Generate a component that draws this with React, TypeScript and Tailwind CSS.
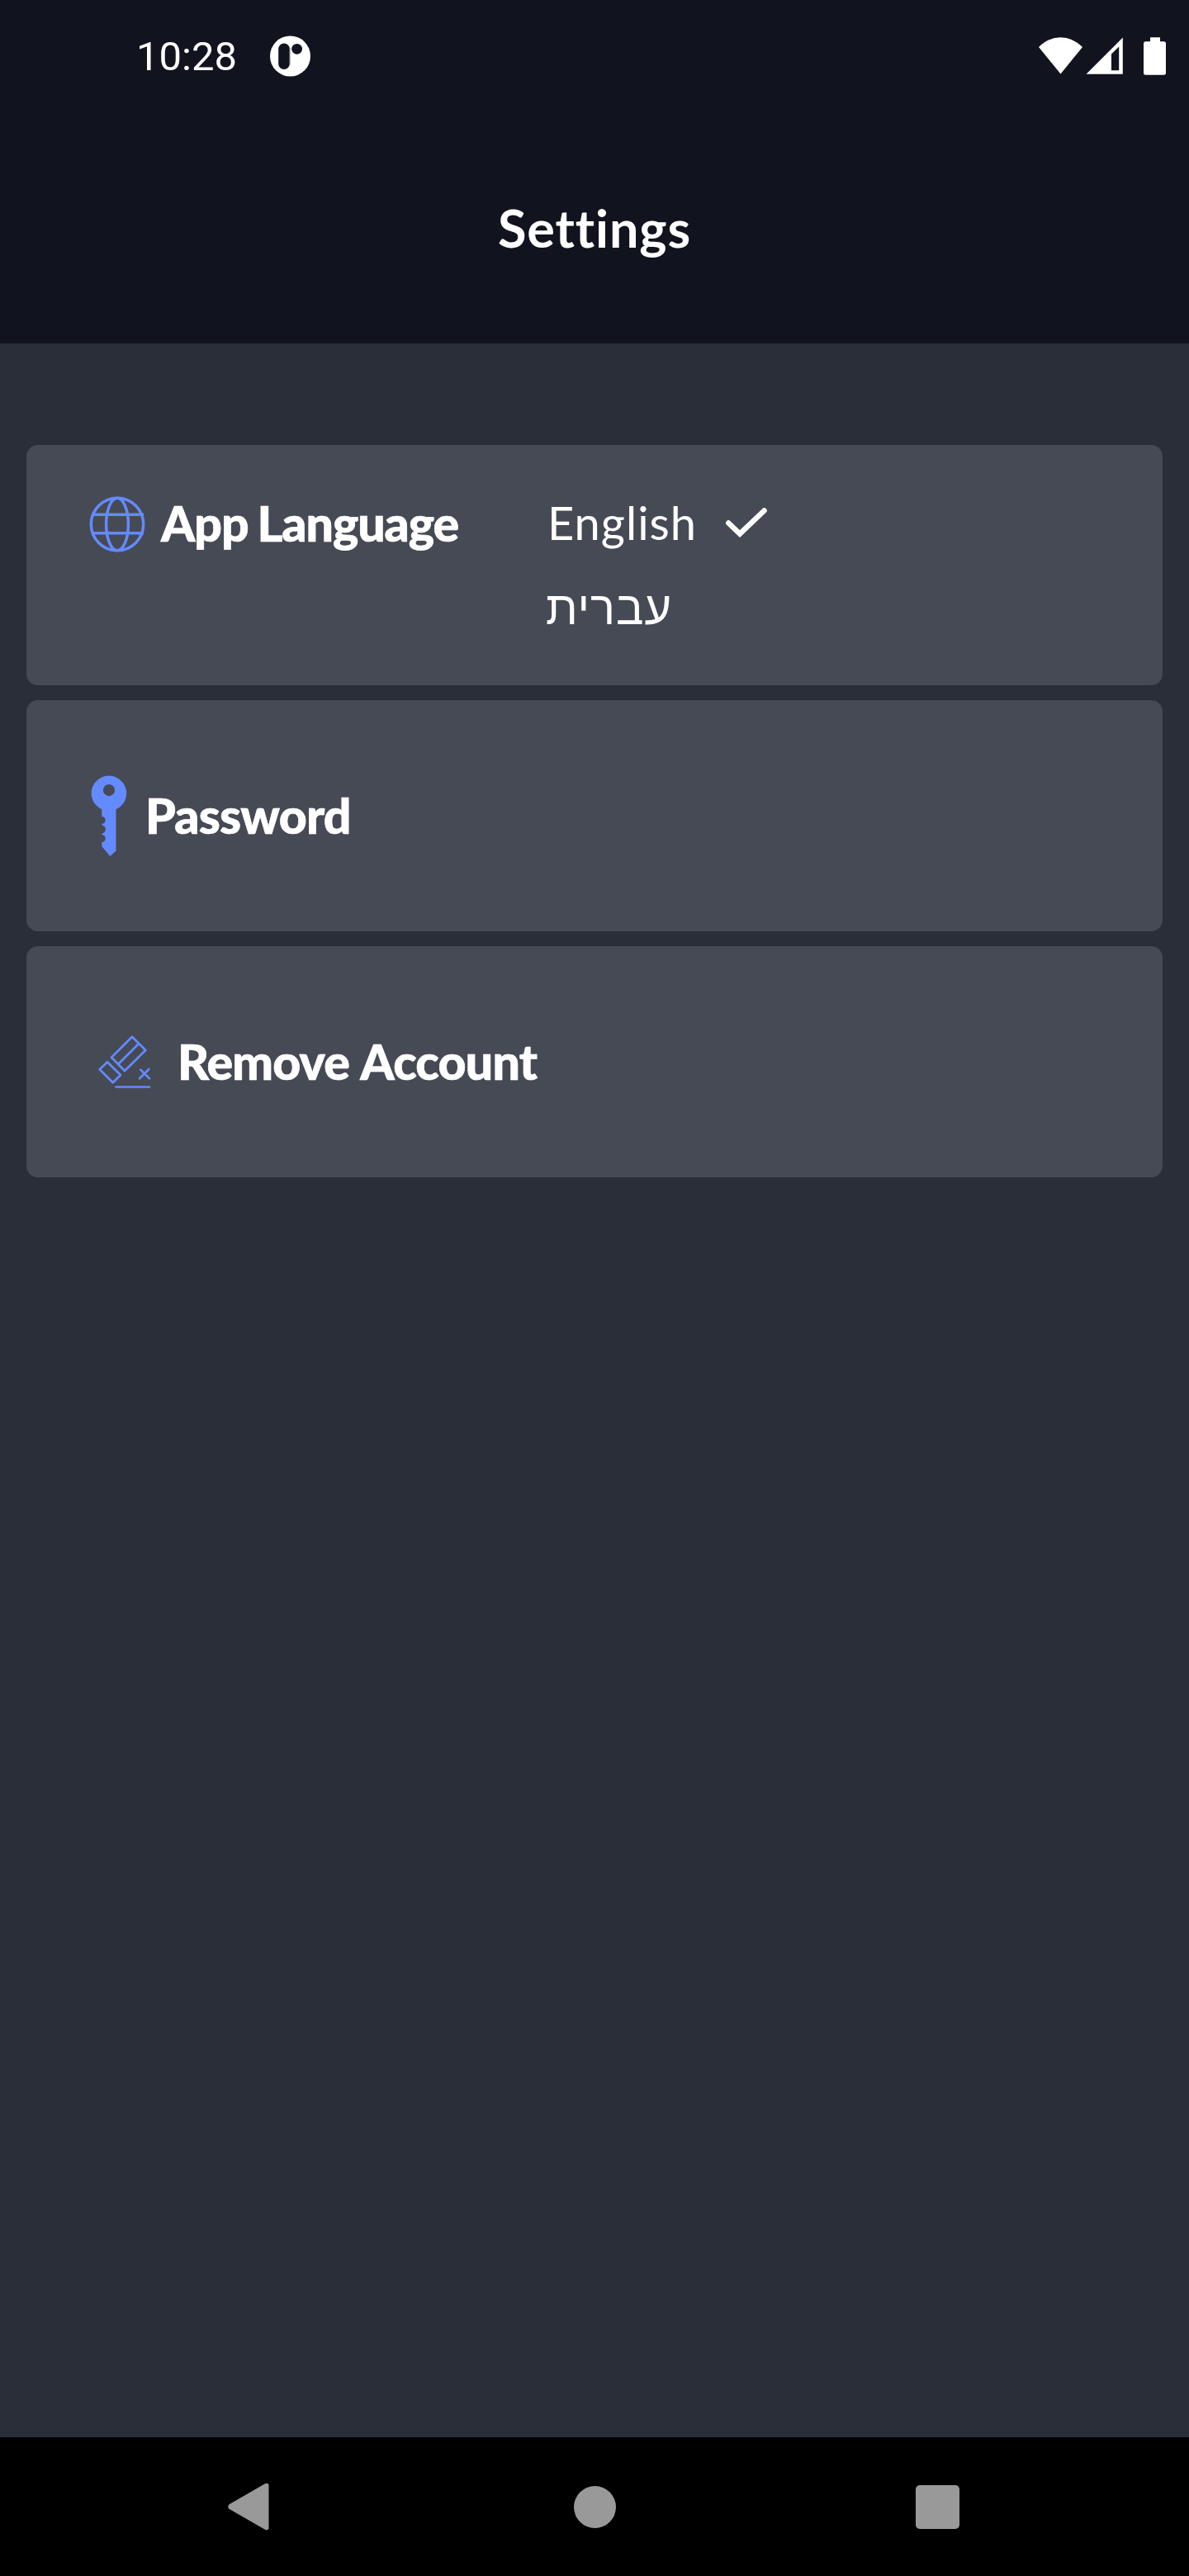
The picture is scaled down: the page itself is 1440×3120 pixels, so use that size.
import React from "react";

function StatusBar() {
  return (
    <div className="flex h-[136px] items-center pl-[165px] pr-[28px]">
      <span className="w-[162px] whitespace-nowrap pt-[2px] font-['Roboto',sans-serif] text-[49px] leading-[56px]">10:28</span>
      <svg className="h-[50px] w-[50px]" viewBox="0 0 50 50">
        <circle cx="24.5" cy="25" r="24.5" fill="#fff" />
        <rect x="10.2" y="9.5" width="13.6" height="31.5" rx="6.8" fill="#11131e" />
        <path d="M24.2 15v21" stroke="#8b8c92" strokeWidth="0.8" />
        <circle cx="32.6" cy="16.3" r="6.4" fill="#11131e" />
      </svg>
      <svg className="ml-auto h-[48px] w-[156px]" viewBox="1256 44 156 48" fill="#fff">
        <path d="M1284.5 89.5 1258 57Q1270 45.2 1284.5 45.2T1311 57Z" />
        <path fillRule="evenodd" d="M1315.5 89.7 1359.8 45.6V89.7ZM1346 85.3H1355.2V56.4L1346 65.5Z" />
        <path d="M1393 45.2h12v5h4.500q2.500 0 2.500 2.500v35.500q0 2.500-2.500 2.500h-22q-2.500 0-2.500-2.500V52.700q0-2.500 2.500-2.500h5.500Z" />
      </svg>
    </div>
  );
}

function Header() {
  return (
    <header className="h-[416px] bg-[#11131e]">
      <StatusBar />
      <div className="flex h-[280px] justify-center pt-[102px]">
        <h1 className="h-[74px] overflow-hidden text-[63px] font-bold leading-[76px] tracking-[0.85px]">Settings</h1>
      </div>
    </header>
  );
}

function GlobeIcon() {
  return (
    <svg className="h-[68px] w-[68px] shrink-0" viewBox="0 0 68 68" fill="none" stroke="#648aff" strokeWidth="3.5">
      <circle cx="34" cy="34" r="31.7" />
      <ellipse cx="34" cy="34" rx="13.4" ry="31.7" />
      <path d="M4.500 22.200H66M4.500 44.800H66" />
    </svg>
  );
}

function KeyIcon() {
  return (
    <svg className="h-[98px] w-[44px] shrink-0" viewBox="110 938 44 98" fill="#648aff">
      <path
        fillRule="evenodd"
        d="M140.500 979.300A21.300 21.300 0 1 0 123.300 979.300V988C128.500 987.500 129 995.500 125 996.500Q121.500 998 125 999C129 1000.500 128.500 1007 125 1008Q121.500 1009.500 125 1010.500C129 1011.500 128.500 1019 123.300 1019.300V1024L133.300 1036 140.500 1029.500ZM132 949a7.100 7.100 0 1 1 0 14.200a7.100 7.100 0 1 1 0-14.200Z"
      />
    </svg>
  );
}

function EraserIcon() {
  return (
    <svg className="h-[66px] w-[66px] shrink-0" viewBox="118 1252.700 66 66" fill="none" stroke="#648aff" strokeWidth="2.7">
      <path strokeLinejoin="round" d="M160 1255.500 176.300 1271.700 151 1296.700 135 1280.500ZM143.300 1288.500 167.800 1264" />
      <path strokeLinejoin="round" d="M130 1286 146 1301.700 136.700 1311 120.700 1295Z" />
      <path strokeLinecap="round" d="M170.300 1295.300 181 1306M180.300 1294.700 169 1306M140.500 1316.200H181" />
    </svg>
  );
}

function CheckIcon() {
  return (
    <svg className="h-[40px] w-[54px]" viewBox="878 614 54 40" fill="none" stroke="#fff" strokeWidth="6.500" strokeLinecap="round">
      <path d="M883.300 634.500 897 647.500 926.500 619.500" />
    </svg>
  );
}

function Label({ className, children }: { className: string; children: React.ReactNode }) {
  return (
    <span className={`whitespace-nowrap text-[59px] font-black leading-[72px] [-webkit-text-stroke:0.7px_white] ${className}`}>
      {children}
    </span>
  );
}

export default function App() {
  return (
    <div className="flex h-[3120px] w-[1440px] flex-col bg-[#2a2e39] font-['Lato',sans-serif] text-white">
      <Header />
      <main className="flex grow flex-col gap-[18px] px-[32px] pt-[123px]">
        <section className="flex h-[291px] rounded-[14px] bg-[#464a55] pl-[76px] pt-[59px]">
          <div className="flex h-[72px] w-[553px] gap-[19px]">
            <div className="pt-[3px]">
              <GlobeIcon />
            </div>
            <Label className="tracking-[-1.05px] [word-spacing:-2px]">App Language</Label>
          </div>
          <div className="flex flex-col gap-[34px] text-[56px] leading-[70px] tracking-[1px]">
            <div className="flex items-center gap-[33px] pl-[2px]">
              <span>English</span>
              <CheckIcon />
            </div>
            <span dir="rtl" lang="he" className="self-start font-['Liberation_Sans',sans-serif]">עברית</span>
          </div>
        </section>
        <section className="flex h-[280px] items-center gap-[22px] rounded-[14px] bg-[#464a55] pl-[78px]">
          <KeyIcon />
          <Label className="tracking-[-0.8px]">Password</Label>
        </section>
        <section className="flex h-[280px] items-center gap-[31px] rounded-[14px] bg-[#464a55] pl-[86px]">
          <EraserIcon />
          <Label className="tracking-[-0.8px] [word-spacing:2px]">Remove Account</Label>
        </section>
      </main>
      <nav className="flex h-[168px] items-center bg-black pl-[276px]">
        <svg className="h-[58px] w-[50px]" viewBox="0 0 50 58" fill="#999">
          <path d="M44.500 1.600Q49.500-1 49.500 4V54Q49.500 59 44.500 56.400L1.500 31.800Q-1 29 1.500 26.200Z" />
        </svg>
        <div className="ml-[368.5px] h-[51px] w-[51px] rounded-full bg-[#999]" />
        <div className="ml-[363px] h-[53px] w-[53px] rounded-[5px] bg-[#999]" />
      </nav>
    </div>
  );
}
